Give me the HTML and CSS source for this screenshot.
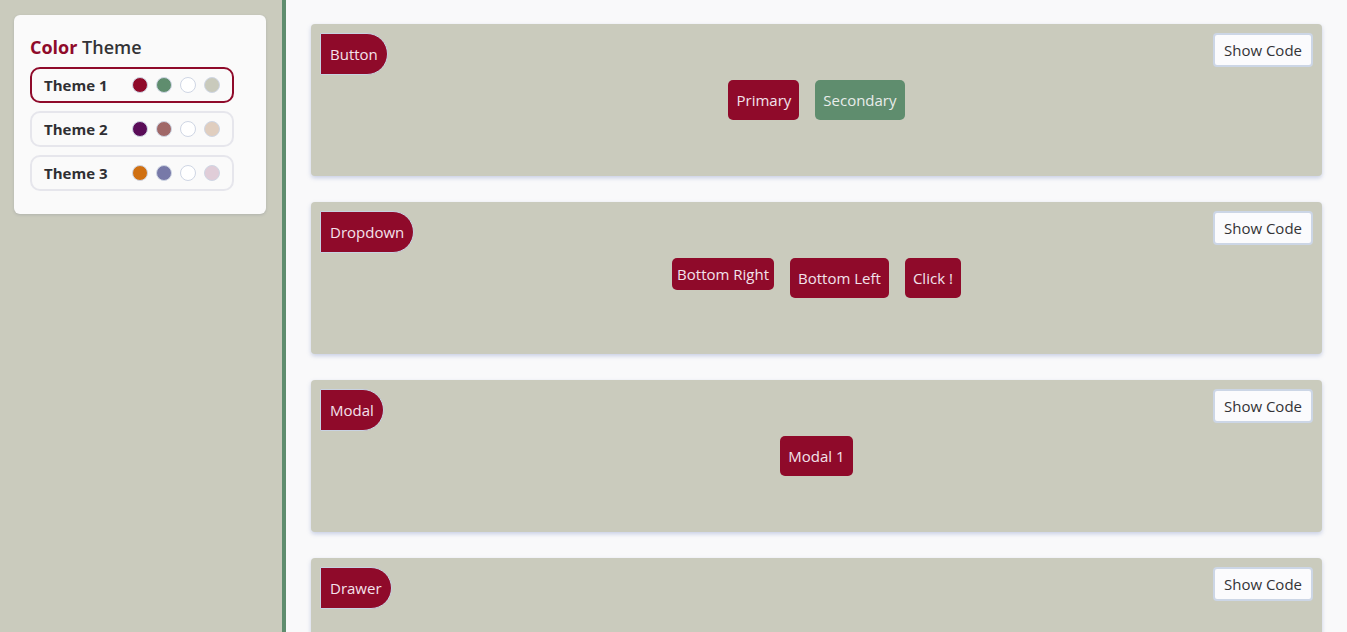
FILE: index.html
```html
<!DOCTYPE html>
<html lang="en">
<head>
<meta charset="utf-8">
<title>Components</title>
<link rel="stylesheet" href="styles.css">
</head>
<body>
<div class="layout">
  <aside class="sidebar">
    <div class="theme-card">
      <h2 class="theme-title"><span class="accent">Color</span> Theme</h2>
      <div class="theme-list">
        <div class="theme-row active">
          <span class="theme-name">Theme 1</span>
          <span class="dots">
            <span class="dot" style="background:#8f0a2a"></span>
            <span class="dot" style="background:#5f8d6e"></span>
            <span class="dot" style="background:#ffffff"></span>
            <span class="dot" style="background:#c9cabc"></span>
          </span>
        </div>
        <div class="theme-row">
          <span class="theme-name">Theme 2</span>
          <span class="dots">
            <span class="dot" style="background:#5a0d58"></span>
            <span class="dot" style="background:#a06868"></span>
            <span class="dot" style="background:#ffffff"></span>
            <span class="dot" style="background:#e0cebf"></span>
          </span>
        </div>
        <div class="theme-row">
          <span class="theme-name">Theme 3</span>
          <span class="dots">
            <span class="dot" style="background:#d07012"></span>
            <span class="dot" style="background:#7779a8"></span>
            <span class="dot" style="background:#ffffff"></span>
            <span class="dot" style="background:#e0cdd8"></span>
          </span>
        </div>
      </div>
    </div>
  </aside>
  <main class="main">
    <section class="demo-card">
      <div class="demo-head">
        <span class="tag">Button</span>
        <button class="code-btn">Show Code</button>
      </div>
      <div class="demo-body">
        <button class="btn primary">Primary</button>
        <button class="btn secondary">Secondary</button>
      </div>
    </section>
    <section class="demo-card">
      <div class="demo-head">
        <span class="tag">Dropdown</span>
        <button class="code-btn">Show Code</button>
      </div>
      <div class="demo-body">
        <button class="btn primary small">Bottom Right</button>
        <button class="btn primary">Bottom Left</button>
        <button class="btn primary">Click !</button>
      </div>
    </section>
    <section class="demo-card">
      <div class="demo-head">
        <span class="tag">Modal</span>
        <button class="code-btn">Show Code</button>
      </div>
      <div class="demo-body">
        <button class="btn primary">Modal 1</button>
      </div>
    </section>
    <section class="demo-card">
      <div class="demo-head">
        <span class="tag">Drawer</span>
        <button class="code-btn">Show Code</button>
      </div>
      <div class="demo-body"></div>
    </section>
  </main>
</div>
</body>
</html>
```

FILE: styles.css
```css
* { box-sizing: border-box; }
html, body { margin: 0; height: 100%; }
body {
  font-family: "Open Sans", "Noto Sans", sans-serif;
  background: #f9f9fa;
  color: #2f2f33;
  overflow: hidden;
}
.layout {
  display: flex;
  height: 632px;
}
.sidebar {
  width: 286px;
  flex: none;
  background: #cacbbd;
  border-right: 4px solid #5f8d6e;
  padding: 15px 16px 0 14px;
}
.theme-card {
  width: 252px;
  background: #fafafa;
  border-radius: 6px;
  padding: 20px 16px 23px 16px;
  box-shadow: 0 1px 3px rgba(60, 70, 100, 0.18);
}
.theme-title {
  margin: 0 0 8px 0;
  font-size: 18px;
  line-height: 24px;
  font-weight: 600;
  color: #333336;
}
.theme-title .accent { color: #8f0a2a; font-weight: 700; }
.theme-list {
  display: flex;
  flex-direction: column;
  gap: 8px;
}
.theme-row {
  width: 204px;
  height: 36px;
  border: 2px solid #e6e6ec;
  border-radius: 10px;
  display: flex;
  align-items: center;
  padding: 0 12px;
}
.theme-row.active { border-color: #8f0a2a; }
.theme-name {
  width: 88px;
  font-size: 15px;
  font-weight: 700;
  color: #2f2f33;
}
.dots { display: flex; gap: 8px; }
.dot {
  width: 16px;
  height: 16px;
  border-radius: 50%;
  border: 1px solid #cfd6e4;
}
.main {
  flex: 1;
  padding: 24px 25px;
  display: flex;
  flex-direction: column;
  gap: 26px;
}
.demo-card {
  height: 152px;
  flex: none;
  background: #cacbbd;
  border-radius: 4px;
  padding: 9px 9px;
  box-shadow: 0 2px 4px rgba(110, 130, 190, 0.35);
}
.demo-head {
  display: flex;
  justify-content: space-between;
  align-items: flex-start;
}
.tag {
  height: 42px;
  display: inline-flex;
  align-items: center;
  padding: 0 9px 0 9px;
  background: #8f0a2a;
  color: #f4e2ec;
  font-size: 15px;
  border: 1px solid #c8d2e2;
  border-radius: 0 21px 21px 0;
}
.code-btn {
  height: 34px;
  padding: 0 9px;
  background: #fbfbfd;
  border: 2px solid #ccd6e6;
  border-radius: 4px;
  font-family: inherit;
  font-size: 15px;
  color: #333336;
}
.demo-body {
  display: flex;
  justify-content: center;
  align-items: flex-start;
  gap: 16px;
  margin-top: 5px;
}
.btn {
  height: 40px;
  padding: 0 8px;
  border: none;
  border-radius: 5px;
  font-family: inherit;
  font-size: 15px;
  color: #f2e2ea;
}
.btn.primary { background: #8f0a2a; }
.btn.secondary { background: #5f8d6e; color: #e8ecea; }
.btn.small { height: 32px; padding: 0 5px; }
```
